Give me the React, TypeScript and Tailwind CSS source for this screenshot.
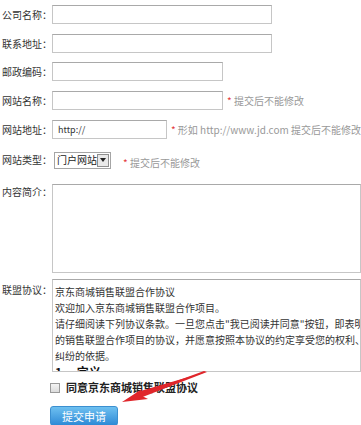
const font = { fontFamily: '"Noto Sans CJK SC", "Noto Sans", sans-serif' }

function Label({ text }: { text: string }) {
  return <span className="w-[50px] shrink-0 text-[10px] leading-none text-[#333]">{text}</span>
}

function Note({ text }: { text: string }) {
  return (
    <span className="ml-[4px] whitespace-nowrap text-[10px] leading-none text-[#999]">
      <span className="text-[#e4393c]">*</span> {text}
    </span>
  )
}

function Field({ label, width, value, note, top }: { label: string; width: string; value?: string; note?: string; top: string }) {
  return (
    <div className={`flex items-center ${top}`}>
      <Label text={label} />
      <div className={`h-[19px] ${width} flex items-center border border-[#c6c6c6] border-t-[#a9a9a9] bg-white px-[5px] text-[9px] text-[#333]`}>
        {value}
      </div>
      {note && <Note text={note} />}
    </div>
  )
}

export default function App() {
  return (
    <div className="relative h-[425px] w-[361px] overflow-hidden bg-white" style={font}>
      <div className="flex flex-col pl-[2px] pt-[5px]">
        <Field label="公司名称：" width="w-[220px]" top="" />
        <Field label="联系地址：" width="w-[220px]" top="mt-[10px]" />
        <Field label="邮政编码：" width="w-[171px]" top="mt-[9px]" />
        <Field label="网站名称：" width="w-[171px]" top="mt-[10px]" note="提交后不能修改" />
        <Field label="网站地址：" width="w-[171px]" top="mt-[10px]" value="http://" note="形如 http://www.jd.com 提交后不能修改" />

        <div className="mt-[9px] flex items-center">
          <Label text="网站类型：" />
          <div className="ml-[2px] flex h-[17px] w-[57px] items-center border border-[#a5a5a5] bg-white pl-[2px] text-[10px] text-[#222]">
            <span className="flex-1 leading-none">门户网站</span>
            <span className="mr-[1px] flex h-[13px] w-[12px] items-center justify-center border border-[#8f8f8f] bg-[#e9e9e9]">
              <svg width="6" height="4" viewBox="0 0 6 4"><path d="M0 0h6L3 4z" fill="#222" /></svg>
            </span>
          </div>
          <span className="ml-[8px]"><Note text="提交后不能修改" /></span>
        </div>

        <div className="mt-[12px] flex items-start">
          <span className="w-[50px] shrink-0 pt-[3px] text-[10px] leading-none text-[#333]">内容简介：</span>
          <div className="h-[89px] w-[330px] border border-[#c6c6c6] border-t-[#a9a9a9] bg-white" />
        </div>

        <div className="mt-[6px] flex items-start">
          <span className="w-[50px] shrink-0 pt-[6px] text-[10px] leading-none text-[#333]">联盟协议：</span>
          <div className="h-[93px] w-[330px] overflow-hidden border border-[#c6c6c6] border-t-[#a9a9a9] bg-white pl-[2px] pt-[4px] text-[10px] leading-[16px] text-[#333]">
            <p className="whitespace-nowrap">京东商城销售联盟合作协议</p>
            <p className="whitespace-nowrap">欢迎加入京东商城销售联盟合作项目。</p>
            <p className="whitespace-nowrap">请仔细阅读下列协议条款。一旦您点击"我已阅读并同意"按钮，即表明您已阅读并同意</p>
            <p className="whitespace-nowrap">的销售联盟合作项目的协议，并愿意按照本协议的约定享受您的权利、履行您的义务</p>
            <p className="whitespace-nowrap">纠纷的依据。</p>
            <p className="whitespace-nowrap text-[12px] font-bold text-[#111]">1、 定义</p>
          </div>
        </div>

        <div className="mt-[10px] flex items-center pl-[48px]">
          <span className="h-[10px] w-[10px] border border-[#9a9a9a] bg-gradient-to-b from-[#f4f4f4] to-[#dcdcdc]" />
          <span className="ml-[6px] text-[11px] font-bold leading-none text-[#222]">同意京东商城销售联盟协议</span>
        </div>

        <div className="mt-[13px] pl-[48px]">
          <div className="flex h-[20px] w-[68px] items-center justify-center rounded-[3px] border border-[#3b8fd0] bg-gradient-to-b from-[#6ec0f0] to-[#2c8ad6] text-[11px] text-white">
            提交申请
          </div>
        </div>
      </div>

      <svg className="absolute left-[118px] top-[365px]" width="100" height="45" viewBox="0 0 100 45">
        <path d="M88 7 L20 31 L19 27 Z" fill="#e0262b" />
        <path d="M86 6 L89 7 L22 33 L20 30 Z" fill="#e0262b" />
        <path d="M4 37 L24 24 L22 30 L30 34 Z" fill="#e0262b" />
      </svg>
    </div>
  )
}
